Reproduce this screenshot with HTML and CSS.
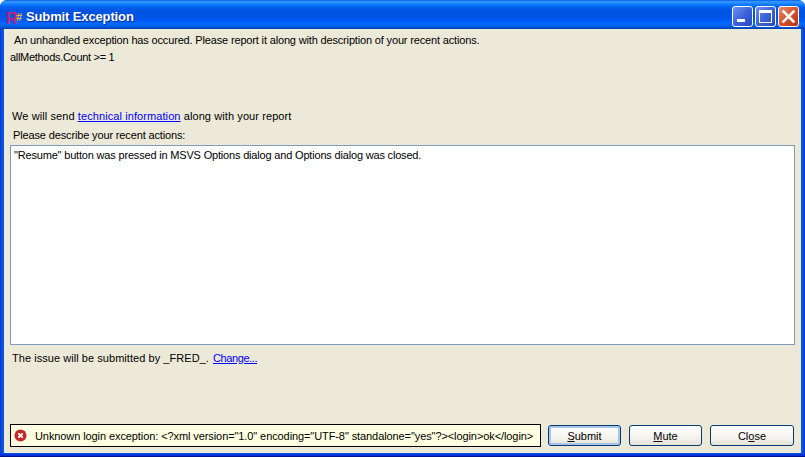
FILE: index.html
```html
<!DOCTYPE html>
<html lang="en">
<head>
<meta charset="utf-8">
<title>Submit Exception</title>
<link rel="stylesheet" href="styles.css">
</head>
<body>
<div class="window">
  <header class="titlebar">
    <span class="app-icon"><span class="icon-r">R</span><span class="icon-hash">#</span></span>
    <span class="title">Submit Exception</span>
    <div class="controls">
      <button class="ctl" aria-label="Minimize"><svg width="21" height="21" viewBox="0 0 21 21"><rect x="5" y="13" width="8" height="3" fill="#fff"/></svg></button>
      <button class="ctl" aria-label="Maximize"><svg width="21" height="21" viewBox="0 0 21 21"><rect x="4.5" y="4.5" width="12" height="12" fill="none" stroke="#fff"/><rect x="4" y="4" width="13" height="3" fill="#fff"/></svg></button>
      <button class="ctl ctl-close" aria-label="Close"><svg width="21" height="21" viewBox="0 0 21 21"><path d="M5.5 5.5l10 10M15.5 5.5l-10 10" stroke="#fff" stroke-width="2.6" stroke-linecap="square"/></svg></button>
    </div>
  </header>
  <main class="content">
    <p class="intro">An unhandled exception has occured. Please report it along with description of your recent actions.</p>
    <p class="message">allMethods.Count &gt;= 1</p>
    <p class="send">We will send <a href="#">technical information</a> along with your report</p>
    <p class="describe">Please describe your recent actions:</p>
    <div class="textbox">"Resume" button was pressed in MSVS Options dialog and Options dialog was closed.</div>
    <p class="issue">The issue will be submitted by _FRED_. <a class="change" href="#">Change...</a></p>
    <div class="footer">
      <div class="status">
        <svg class="err" width="13" height="13" viewBox="0 0 13 13"><circle cx="6.5" cy="6.5" r="6" fill="#c4282b"/><path d="M4.3 4.3l4.4 4.4M8.7 4.3l-4.4 4.4" stroke="#fff" stroke-width="1.8"/></svg>
        <span>Unknown login exception: &lt;?xml version="1.0" encoding="UTF-8" standalone="yes"?&gt;&lt;login&gt;ok&lt;/login&gt;</span>
      </div>
      <button class="btn btn-default"><u>S</u>ubmit</button>
      <button class="btn"><u>M</u>ute</button>
      <button class="btn btn-close">Cl<u>o</u>se</button>
    </div>
  </main>
</div>
</body>
</html>
```
FILE: styles.css
```css
* { box-sizing: border-box; }
html, body { margin: 0; padding: 0; }
body {
  width: 805px;
  height: 457px;
  overflow: hidden;
  font-family: "Liberation Sans", Arial, sans-serif;
  font-size: 11px;
  color: #000;
}
.window {
  width: 805px;
  height: 457px;
  display: flex;
  flex-direction: column;
  background: linear-gradient(90deg, #0831d9 0, #0855dd 2px, #0855dd 803px, #0831d9 805px);
  box-shadow: inset 0 -1px #00138c, inset 0 -3px #0831d9;
  border-radius: 7px 7px 0 0;
  overflow: hidden;
}
.titlebar {
  height: 29px;
  flex: none;
  display: flex;
  align-items: center;
  padding: 4px 6px 0 6px;
  background: linear-gradient(180deg, #0058ee 0%, #3593ff 5%, #288eff 10%, #127dff 15%, #036ffc 20%, #0262ee 25%, #0057e5 33%, #0054e1 42%, #0055eb 62%, #005bf5 72%, #026afe 80%, #0062ef 88%, #0052d6 94%, #0040ab 100%);
}
.app-icon {
  width: 17px;
  height: 16px;
  flex: none;
  font: bold 16px/16px "Liberation Sans", sans-serif;
  letter-spacing: -1.5px;
  white-space: nowrap;
}
.icon-r { color: #c0227e; }
.icon-hash { color: #f5b62e; font-size: 11px; vertical-align: 3px; }
.title {
  margin-left: 3px;
  color: #fff;
  font-weight: bold;
  font-size: 13px;
  letter-spacing: -0.13px;
  text-shadow: 1px 1px 1px #0a2a90;
}
.controls {
  margin-left: auto;
  display: flex;
  gap: 2px;
}
.ctl {
  width: 21px;
  height: 21px;
  padding: 0;
  display: block;
  border: 1px solid #fff;
  border-radius: 3px;
  background: linear-gradient(135deg, #6f93ee 0%, #3c63dc 50%, #2a48c0 100%);
}
.ctl svg { display: block; margin: -1px; }
.ctl-close { background: linear-gradient(135deg, #ec8a6c 0%, #d9512c 50%, #b83010 100%); }
.content {
  flex: 1;
  margin: 0 4px 4px;
  padding: 0 6px;
  background: #ece9d8;
  display: flex;
  flex-direction: column;
  min-height: 0;
}
.content p { margin: 0; line-height: 13px; white-space: nowrap; }
.content a { color: #0000ff; }
.intro { padding: 5px 0 0 4px; letter-spacing: -0.16px; }
.message { padding: 4px 0 0 0; letter-spacing: -0.3px; }
.send { padding: 46px 0 0 2px; letter-spacing: 0.09px; }
.describe { padding: 6px 0 0 3px; letter-spacing: -0.14px; }
.textbox {
  margin: 3px 0 0;
  width: 785px;
  height: 200px;
  flex: none;
  padding: 3px 3px;
  background: #fff;
  border: 1px solid #7f9db9;
  line-height: 13px;
  letter-spacing: -0.18px;
}
.issue { padding: 7px 0 0 2px; letter-spacing: 0.05px; }
.content .change { letter-spacing: -0.4px; margin-left: 1px; }
.footer {
  margin-top: auto;
  margin-bottom: 6px;
  display: flex;
  align-items: center;
}
.status {
  width: 531px;
  height: 23px;
  flex: none;
  display: flex;
  align-items: center;
  gap: 8px;
  padding-left: 3px;
  border: 1px solid #000;
  background: #ffffe1;
  white-space: nowrap;
  letter-spacing: -0.09px;
}
.err { flex: none; }
.btn {
  width: 73px;
  height: 21px;
  flex: none;
  margin-left: 8px;
  padding: 0;
  font: inherit;
  color: #000;
  border: 1px solid #003c74;
  border-radius: 3px;
  background: linear-gradient(180deg, #ffffff 0%, #f4f3ee 60%, #e6e3d6 100%);
}
.btn-default {
  margin-left: 7px;
  box-shadow: inset 0 0 0 2px #a9c4ef;
}
.btn-close { width: 84px; }
```
